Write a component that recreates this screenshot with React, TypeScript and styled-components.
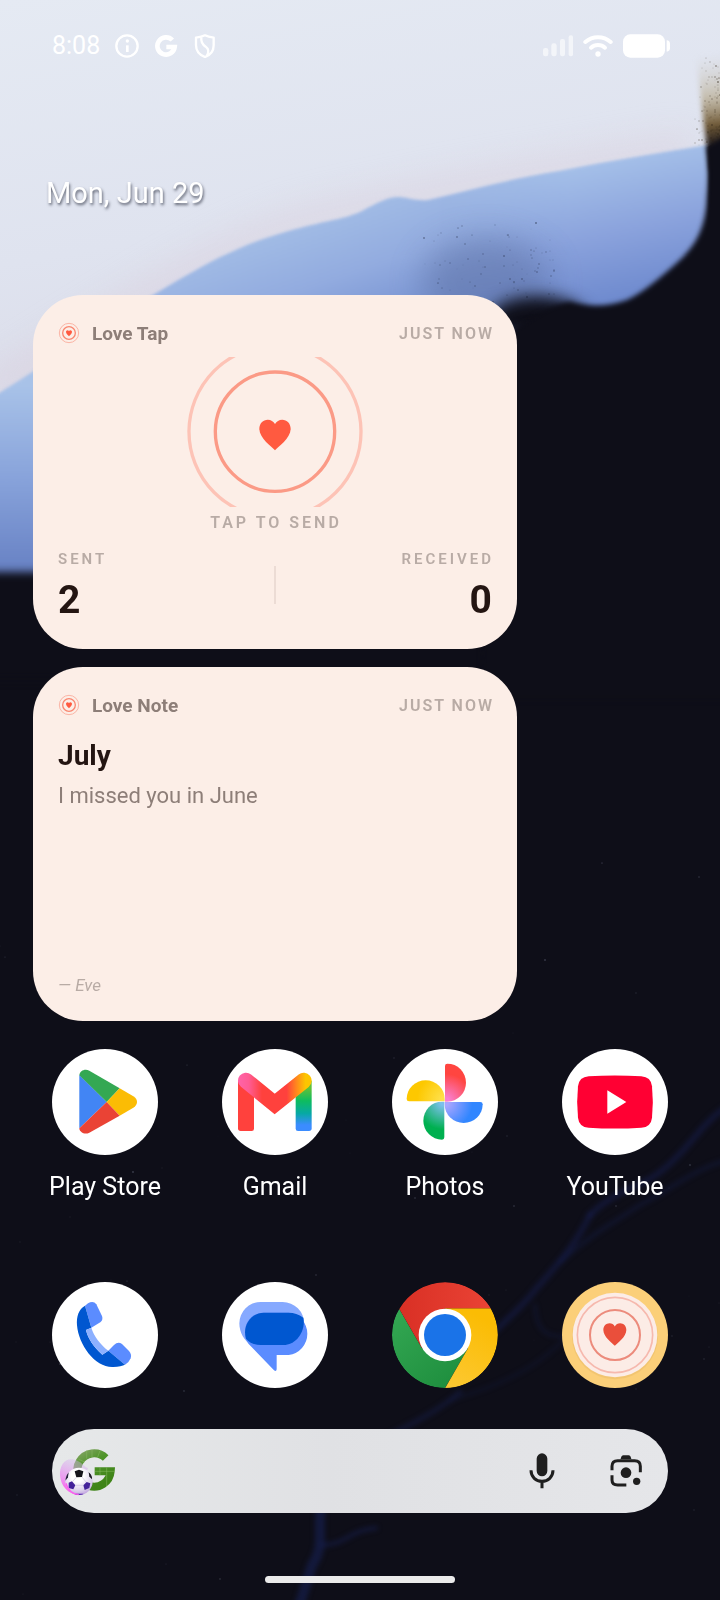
import React from "react";
import styled, { createGlobalStyle } from "styled-components";

const GlobalStyle = createGlobalStyle`
  *, *::before, *::after { box-sizing: border-box; }
  body {
    margin: 0;
    background: #0e0e18;
    font-family: Roboto, "Liberation Sans", sans-serif;
  }
  button, input { font: inherit; color: inherit; }
  h1, h2, p, dl, dd, dt { margin: 0; font-weight: inherit; }
`;

/* ---------- layout ---------- */

const Screen = styled.div`
  position: relative;
  isolation: isolate;
  min-height: 100vh;
  display: flex;
  flex-direction: column;
  overflow: hidden;
`;

const WallpaperSvg = styled.svg`
  position: absolute;
  inset: 0;
  z-index: -1;
  width: 100%;
  height: 100%;
  color-interpolation-filters: sRGB;
`;

const StatusBar = styled.header`
  display: flex;
  justify-content: space-between;
  align-items: center;
  padding: 32px 50px 0 52px;
  color: #fff;
`;

const StatusGroup = styled.div<{ $gap: number }>`
  display: flex;
  align-items: center;
  gap: ${(p) => p.$gap}px;
`;

const Clock = styled.time`
  font-size: 25px;
  line-height: 28px;
`;

const DateLine = styled.p`
  && { margin: 115px 46px 84px; }
  color: #fff;
  font-size: 29px;
  line-height: 36px;
  text-shadow: 1px 2px 3px rgba(40, 44, 60, 0.7);
`;

const HomeGrid = styled.main`
  display: grid;
  grid-template-columns: repeat(4, 1fr);
  padding: 0 20px;
`;

const Widget = styled.section`
  grid-column: span 3;
  display: flex;
  flex-direction: column;
  min-height: 354px;
  margin: 0 13px 18px;
  padding: 27px 25px 26px;
  border-radius: 50px;
  background: #fceee7;
  color: #241512;
`;

const WidgetHeader = styled.div`
  display: flex;
  align-items: flex-start;
  line-height: 24px;
`;

const WidgetTitle = styled.h2`
  && { margin-left: 12px; font-weight: 700; }
  flex: 1;
  font-size: 19px;
  color: #8d7e78;
`;

const Caption = styled.span<{ $wide?: boolean }>`
  margin-right: -2px;
  font-size: 16px;
  line-height: 24px;
  font-weight: 600;
  letter-spacing: ${(p) => (p.$wide ? 3 : 2)}px;
  text-transform: uppercase;
  color: #b8aba5;
`;

const StatCaption = styled(Caption)`
  font-size: 15px;
`;

const TapButton = styled.button`
  display: flex;
  flex-direction: column;
  align-items: center;
  gap: 4px;
  margin-top: 11px;
  padding: 0;
  border: 0;
  background: none;
  cursor: pointer;
`;

const Counters = styled.dl`
  && { margin-top: 12px; }
  display: grid;
  grid-template-columns: 1fr 2px 1fr;
  align-items: center;
`;

const Counter = styled.div<{ $end?: boolean }>`
  display: flex;
  flex-direction: column;
  gap: 7px;
  align-items: ${(p) => (p.$end ? "flex-end" : "flex-start")};
`;

const CountValue = styled.dd`
  && { font-weight: 700; }
  font-size: 39px;
  line-height: 44px;
`;

const Divider = styled.div`
  height: 38px;
  background: #ecdcd5;
`;

const NoteTitle = styled.h1`
  && { margin-top: 20px; font-weight: 700; }
  font-size: 28px;
  line-height: 36px;
`;

const NoteBody = styled.p`
  && { margin-top: 8px; }
  font-size: 22px;
  line-height: 28px;
  color: #8d7e78;
`;

const NoteAuthor = styled.p`
  && { margin-top: auto; }
  font-size: 17px;
  line-height: 20px;
  font-style: italic;
  color: #b8aba5;
`;

const AppLink = styled.a`
  display: flex;
  flex-direction: column;
  align-items: center;
  gap: 16px;
  color: #fff;
  font-size: 25px;
  line-height: 32px;
  text-decoration: none;
  white-space: nowrap;
`;

const AppRow = styled.nav`
  grid-column: 1 / -1;
  display: grid;
  grid-template-columns: subgrid;
  margin-top: 10px;
`;

const Dock = styled(AppRow)`
  margin-top: 79px;
`;

const IconSvg = styled.svg<{ $bare?: boolean }>`
  display: block;
  width: 106px;
  height: 106px;
  border-radius: 50%;
  background: ${(p) => (p.$bare ? "none" : "#fff")};
`;

const SearchBar = styled.form`
  display: flex;
  align-items: center;
  height: 84px;
  margin: 41px 52px 0;
  padding: 0 18px 0 6px;
  border-radius: 42px;
  background: linear-gradient(90deg, #e6e8e9, #e0e1e4 45%, #e5e6e9);
  color: #1f1f1f;
`;

const SearchInput = styled.input`
  flex: 1;
  min-width: 0;
  height: 56px;
  border: 0;
  outline: 0;
  background: transparent;
  font-size: 24px;
`;

const IconButton = styled.button`
  display: flex;
  padding: 0;
  border: 0;
  background: none;
  cursor: pointer;
  & + & { margin-left: 36px; }
`;

const GestureBar = styled.div`
  align-self: center;
  width: 190px;
  height: 7px;
  margin: 63px 0 16px;
  border-radius: 4px;
  background: #ebebeb;
`;

/* ---------- wallpaper ---------- */

type Dot = { x: number; y: number; r: number; o: number };

function scatter(seed: number, count: number, x: number, y: number, w: number, h: number, bias: number): Dot[] {
  let s = seed;
  const next = () => {
    s = (s * 16807) % 2147483647;
    return s / 2147483647;
  };
  return Array.from({ length: count }, () => ({
    x: Math.round(x + w * Math.pow(next(), bias)),
    y: Math.round(y + h * Math.pow(next(), bias)),
    r: 0.4 + next() * 0.6,
    o: 0.12 + next() * 0.4,
  }));
}

const stars = scatter(77, 60, 0, 850, 720, 750, 1);
const dust = scatter(913, 90, 420, 222, 135, 85, 0.7);
const grit = scatter(4211, 130, 694, 50, 28, 95, 0.5);

const Dots = ({ dots, fill }: { dots: Dot[]; fill: string }) => (
  <g fill={fill}>
    {dots.map((d, i) => (
      <circle key={i} cx={d.x} cy={d.y} r={d.r} opacity={d.o} />
    ))}
  </g>
);

const Wallpaper = () => (
  <WallpaperSvg viewBox="0 0 720 1600" preserveAspectRatio="xMidYMin slice" aria-hidden="true">
    <defs>
      <linearGradient id="sky" x1="0" y1="0" x2="0.25" y2="1">
        <stop offset="0" stopColor="#e5eaf3" />
        <stop offset="0.5" stopColor="#dfe3ef" />
        <stop offset="0.85" stopColor="#dadbe8" />
        <stop offset="1" stopColor="#d6d9ea" />
      </linearGradient>
      <linearGradient id="wave" gradientUnits="userSpaceOnUse" x1="300" y1="190" x2="360" y2="370">
        <stop offset="0" stopColor="#a9c4e8" />
        <stop offset="0.5" stopColor="#92abdf" />
        <stop offset="1" stopColor="#6683c9" />
      </linearGradient>
      <linearGradient id="waveRight" gradientUnits="userSpaceOnUse" x1="590" y1="165" x2="620" y2="305">
        <stop offset="0" stopColor="#a4bfe8" />
        <stop offset="0.5" stopColor="#8aa2dc" />
        <stop offset="1" stopColor="#6c88cd" />
      </linearGradient>
      <linearGradient id="waveLeft" gradientUnits="userSpaceOnUse" x1="0" y1="385" x2="0" y2="575">
        <stop offset="0" stopColor="#a8c2e8" />
        <stop offset="0.5" stopColor="#87a2da" />
        <stop offset="1" stopColor="#6680c3" />
      </linearGradient>
      <linearGradient id="fadeIn" gradientUnits="userSpaceOnUse" x1="440" y1="0" x2="570" y2="0">
        <stop offset="0" stopColor="#000" />
        <stop offset="1" stopColor="#fff" />
      </linearGradient>
      <linearGradient id="scorch" gradientUnits="userSpaceOnUse" x1="704" y1="55" x2="716" y2="148">
        <stop offset="0" stopColor="#cdc8bd" stopOpacity="0" />
        <stop offset="0.45" stopColor="#b3a483" stopOpacity="0.6" />
        <stop offset="0.75" stopColor="#705a38" />
        <stop offset="1" stopColor="#14121a" />
      </linearGradient>
      <mask id="rightMask">
        <rect width="720" height="600" fill="url(#fadeIn)" />
      </mask>
      <filter id="soft1" x="-10%" y="-10%" width="120%" height="120%"><feGaussianBlur stdDeviation="1.5" /></filter>
      <filter id="soft2" x="-30%" y="-30%" width="160%" height="160%"><feGaussianBlur stdDeviation="2.5" /></filter>
      <filter id="soft4" x="-30%" y="-30%" width="160%" height="160%"><feGaussianBlur stdDeviation="4" /></filter>
      <filter id="soft8" x="-50%" y="-50%" width="200%" height="200%"><feGaussianBlur stdDeviation="8" /></filter>
      <filter id="soft16" x="-60%" y="-60%" width="220%" height="220%"><feGaussianBlur stdDeviation="16" /></filter>
      <clipPath id="waveClip">
        <path d="M-10 399 C60 356 100 325 153 295 C215 258 245 242 300 228 C330 220 345 219 362 211 C378 202 390 196 400 197 C410 198 416 201 428 200 C470 190 510 179 560 171 C610 161 660 153 709 145 V620 H-10Z" />
      </clipPath>
    </defs>
    <rect width="720" height="1600" fill="#0e0e18" />
    <path d="M0 0 H720 V140 L702 150 L300 420 L0 500Z" fill="url(#sky)" />
    <path d="M-10 390 C60 348 200 252 300 222 C400 196 560 168 690 146" fill="none" stroke="#d9cbd9" strokeOpacity="0.55" strokeWidth="22" filter="url(#soft16)" />

    <g filter="url(#soft1)">
      <path
        d="M-10 399 C60 356 100 325 153 295 C215 258 245 242 300 228 C330 220 345 219 362 211 C378 202 390 196 400 197 C410 198 416 201 428 200 C470 190 510 179 560 171 C610 161 660 153 709 145 V620 H-10Z"
        fill="url(#wave)"
      />
      <path d="M-10 399 C20 380 60 356 90 333 V600 H-10Z" fill="url(#waveLeft)" />
      <path d="M428 200 C470 190 510 179 560 171 C610 161 660 153 709 145 V330 H428Z" fill="url(#waveRight)" mask="url(#rightMask)" />
    </g>

    <path d="M696 52 L728 36 V170 H710 C704 130 700 90 696 52Z" fill="url(#scorch)" filter="url(#soft2)" />
    <Dots dots={grit} fill="#33281a" />

    <g clipPath="url(#waveClip)">
      <ellipse cx="486" cy="282" rx="64" ry="44" fill="#5f73a6" opacity="0.55" filter="url(#soft16)" />
      <ellipse cx="538" cy="318" rx="48" ry="22" fill="#0e0e18" filter="url(#soft8)" />
    </g>
    <path d="M-20 572 H60 L480 362 L520 326 L600 318 V680 H-20Z" fill="#0e0e18" filter="url(#soft4)" />
    <path
      d="M500 340 C530 320 548 306 570 302 C590 307 606 307 627 300 C642 293 662 277 682 258 C696 244 706 227 707 196 C709 178 708 160 707 148 L728 134 V700 H480Z"
      fill="#0e0e18"
      filter="url(#soft2)"
    />
    <Dots dots={dust} fill="#1d2439" />

    <g fill="none" stroke="#18225a" strokeLinecap="round" filter="url(#soft2)">
      <path d="M730 1105 C700 1122 690 1150 660 1172 C640 1188 615 1190 590 1215" strokeWidth="6" opacity="0.45" />
      <path d="M590 1215 C575 1245 560 1262 535 1290 C520 1310 500 1325 480 1345" strokeWidth="6" opacity="0.45" />
      <path d="M730 1160 C700 1165 670 1190 640 1205 C610 1225 590 1235 560 1262" strokeWidth="4" opacity="0.35" />
      <path d="M535 1305 C536 1335 550 1340 580 1334" strokeWidth="3" opacity="0.35" />
      <path d="M600 1290 C560 1365 500 1385 450 1400" strokeWidth="3" opacity="0.25" />
      <path d="M460 1392 C440 1410 410 1425 380 1440" strokeWidth="5" opacity="0.4" />
      <path d="M322 1500 C316 1530 326 1545 312 1565 L298 1610" strokeWidth="10" opacity="0.55" />
      <path d="M322 1545 C345 1545 350 1530 376 1528" strokeWidth="4" opacity="0.5" />
    </g>
    <Dots dots={stars} fill="#6a6f82" />
  </WallpaperSvg>
);

/* ---------- small drawings ---------- */

const HEART =
  "M50 98 C40 86 0 60 0 29 C0 12 12 0 27 0 C37 0 45 5 50 14 C55 5 63 0 73 0 C88 0 100 12 100 29 C100 60 60 86 50 98Z";

const Heart = ({ x, y, size, fill }: { x: number; y: number; size: number; fill: string }) => (
  <path d={HEART} fill={fill} transform={`translate(${x} ${y}) scale(${size / 100})`} />
);

const LoveMark = () => (
  <svg width="22" height="22" viewBox="0 0 66 66" fill="none" aria-hidden="true">
    <circle cx="33" cy="33" r="29" stroke="#fbb5a6" strokeWidth="3" />
    <circle cx="33" cy="33" r="19" stroke="#f98670" strokeWidth="4" />
    <Heart x={24} y={25} size={18} fill="#ff5a40" />
  </svg>
);

const TapRings = () => (
  <svg width="180" height="150" viewBox="0 0 540 450" fill="none" aria-hidden="true">
    <circle cx="270" cy="224" r="258" stroke="#fdc3b6" strokeWidth="10" />
    <circle cx="270" cy="224" r="179" stroke="#fb9a86" strokeWidth="10" />
    <Heart x={223} y={188} size={94} fill="#ff5a40" />
  </svg>
);

const StatusIcons = () => (
  <>
    <svg width="24" height="24" viewBox="0 0 72 72" fill="none" stroke="#fff" role="img" aria-label="Info">
      <circle cx="36" cy="36" r="32" strokeWidth="7" />
      <path d="M37 34V54" strokeWidth="8" />
      <circle cx="37" cy="21" r="5" fill="#fff" stroke="none" />
    </svg>
    <svg width="24" height="24" viewBox="0 0 72 72" fill="none" stroke="#fff" strokeWidth="14" role="img" aria-label="Google">
      <path d="M55 18 A26 26 0 1 0 62 39 H37" />
    </svg>
    <svg width="24" height="24" viewBox="0 0 72 72" fill="none" stroke="#fff" strokeWidth="7" strokeLinejoin="round" role="img" aria-label="Security">
      <path d="M36 4 C43 8 52 10 62 11 V34 C62 52 50 64 36 69 C22 64 9 52 9 34 V11 C19 10 29 8 36 4Z" />
      <path d="M25 10 C23 26 29 32 38 38 C49 46 48 54 42 65" />
    </svg>
  </>
);

const SystemIcons = () => (
  <>
    <svg width="30" height="24" viewBox="0 0 90 72" fill="#fff" role="img" aria-label="No signal">
      <g opacity="0.6">
        <rect x="0" y="42" width="16" height="25" rx="7" />
        <rect x="25" y="28" width="16" height="39" rx="7" />
        <rect x="51" y="15" width="15" height="52" rx="7" />
        <rect x="77" y="4" width="13" height="63" rx="6" />
      </g>
    </svg>
    <svg width="30" height="24" viewBox="0 0 90 72" fill="none" stroke="#fff" strokeWidth="12" strokeLinecap="round" role="img" aria-label="Wi-Fi">
      <path d="M7 24 C29 5 61 5 83 24" />
      <path d="M24 41 C36 30 54 30 66 41" />
      <circle cx="45" cy="60" r="8" fill="#fff" stroke="none" />
    </svg>
    <svg width="47" height="24" viewBox="0 0 141 72" fill="#fff" role="img" aria-label="Battery full">
      <rect x="0" y="1" width="126" height="70" rx="22" />
      <path d="M131 19 Q141 20 141 30 V43 Q141 52 131 53Z" />
    </svg>
  </>
);

/* ---------- app icons ---------- */

const PlayStoreIcon = () => (
  <IconSvg viewBox="0 0 318 318" aria-hidden="true">
    <path d="M82 78 L164 159 L82 238Z" fill="#4285f4" />
    <path d="M82 79 C83 65 99 58 112 65 L203 118 L164 159Z" fill="#34a853" />
    <path d="M203 118 L244 142 Q255 149 255 159 Q255 169 244 176 L203 200 L164 159Z" fill="#fbbc04" />
    <path d="M164 159 L203 200 L112 251 C99 258 83 251 82 238Z" fill="#ea4335" />
  </IconSvg>
);

const GmailIcon = () => (
  <IconSvg viewBox="0 0 318 318" aria-hidden="true">
    <defs>
      <linearGradient id="gmTop" gradientUnits="userSpaceOnUse" x1="50" y1="80" x2="268" y2="80">
        <stop offset="0" stopColor="#ff63a8" />
        <stop offset="0.14" stopColor="#ff5c94" />
        <stop offset="0.32" stopColor="#ff413d" />
        <stop offset="0.66" stopColor="#ff413d" />
        <stop offset="0.8" stopColor="#ff8a1c" />
        <stop offset="0.92" stopColor="#fdc500" />
      </linearGradient>
      <linearGradient id="gmLeg" x1="0" y1="0" x2="0" y2="1">
        <stop offset="0.15" stopColor="#5fc13a" />
        <stop offset="0.4" stopColor="#0ebc5f" />
        <stop offset="0.65" stopColor="#07a9a4" />
        <stop offset="0.88" stopColor="#3b8cff" />
      </linearGradient>
    </defs>
    <path d="M48 95 H96 V239 Q96 246 89 246 H56 Q48 246 48 238Z" fill="#ff413d" />
    <path d="M221 95 H269 V238 Q269 246 261 246 H228 Q221 246 221 239Z" fill="url(#gmLeg)" />
    <path d="M72 95 L158 165 L245 95" fill="none" stroke="url(#gmTop)" strokeWidth="48" strokeLinecap="round" />
  </IconSvg>
);

const petals = [
  { id: "ptRed", turn: 0, near: "#f97fd0", far: "#ff4540" },
  { id: "ptBlue", turn: 90, near: "#a9a5ff", far: "#3186ff" },
  { id: "ptGreen", turn: 180, near: "#7cc0ec", far: "#00b050" },
  { id: "ptYellow", turn: 270, near: "#ffe04a", far: "#fdc800" },
];

const PhotosIcon = () => (
  <IconSvg viewBox="0 0 318 318" aria-hidden="true">
    <defs>
      {petals.map((p) => (
        <radialGradient key={p.id} id={p.id} gradientUnits="userSpaceOnUse" cx="162" cy="156" r="90">
          <stop offset="0.1" stopColor={p.near} />
          <stop offset="0.9" stopColor={p.far} />
        </radialGradient>
      ))}
    </defs>
    {petals.map((p) => (
      <path
        key={p.id}
        d="M159 51 Q159 44 166 44 A56 57 0 0 1 166 158 H159Z"
        fill={`url(#${p.id})`}
        transform={`rotate(${p.turn} 158 158)`}
      />
    ))}
  </IconSvg>
);

const YouTubeIcon = () => (
  <IconSvg viewBox="0 0 318 318" aria-hidden="true">
    <path
      d="M80 82 Q158 77 238 82 Q267 84 270 112 Q275 159 270 206 Q267 234 238 236 Q158 241 80 236 Q51 234 48 206 Q43 159 48 112 Q51 84 80 82Z"
      fill="#ff0033"
    />
    <path d="M136 124 L193 159 L136 194Z" fill="#fff" />
  </IconSvg>
);

const PhoneIcon = () => (
  <IconSvg viewBox="0 0 318 318" aria-hidden="true">
    <path d="M99 71 L108 64 Q124 54 133 67 L150 102 Q154 113 146 120 L118 137Z" fill="#5b8cff" />
    <path d="M169 206 L186 189 Q198 177 210 186 L231 207 Q240 217 236 229 Q231 242 219 248Z" fill="#5b8cff" />
    <path d="M99 71 C80 82 73 103 75 130 C80 190 130 258 184 255 C200 254 212 251 219 248 L169 206 L151 218 C125 195 108 170 102 144 L118 137Z" fill="#0057d0" />
    <path d="M102 144 L118 137 C126 163 145 188 169 206 L151 218 C125 195 108 170 102 144Z" fill="#8cb0ff" />
  </IconSvg>
);

const MessagesIcon = () => (
  <IconSvg viewBox="0 0 318 318" aria-hidden="true">
    <path d="M116 60 H182 A64 64 0 0 1 182 189 H90 C66 178 52 150 52 124 A64 64 0 0 1 116 60Z" fill="#86a9ff" />
    <path d="M125 92 H200 A64 64 0 0 1 200 219 H164 V262 Q163 270 156 265 L80 186 C72 176 69 166 69 150 C69 116 94 92 125 92Z" fill="#5b8cff" />
    <path d="M125 92 H200 C216 92 230 97 244 107 C252 148 222 189 184 189 H116 C98 189 82 182 72 170 C60 130 88 92 125 92Z" fill="#0057d0" />
  </IconSvg>
);

const ChromeIcon = () => (
  <IconSvg $bare viewBox="0 0 318 318" aria-hidden="true">
    <defs>
      <linearGradient id="crRed" x1="0" y1="0" x2="1" y2="0">
        <stop offset="0" stopColor="#d93025" />
        <stop offset="1" stopColor="#ea4335" />
      </linearGradient>
      <linearGradient id="crYellow" x1="0" y1="1" x2="0.4" y2="0">
        <stop offset="0" stopColor="#fcc934" />
        <stop offset="1" stopColor="#fbbc04" />
      </linearGradient>
      <linearGradient id="crGreen" x1="0" y1="0" x2="0.8" y2="1">
        <stop offset="0" stopColor="#34a853" />
        <stop offset="1" stopColor="#1e8e3e" />
      </linearGradient>
    </defs>
    <path d="M159 318 A159 159 0 0 1 0 159 Q0 115 22 81 L90 199 L228 199Z" fill="url(#crGreen)" />
    <path d="M296 79 A160 160 0 0 1 159 319 L228 199 L159 79Z" fill="url(#crYellow)" />
    <path d="M22 81 A159 159 0 0 1 297 79 H159 L90 199Z" fill="url(#crRed)" />
    <circle cx="159" cy="159" r="79" fill="#fff" />
    <circle cx="159" cy="159" r="63" fill="#1a73e8" />
  </IconSvg>
);

const LoveIcon = () => (
  <IconSvg $bare viewBox="0 0 318 318" fill="none" aria-hidden="true">
    <rect width="318" height="318" fill="#fbcf79" />
    <circle cx="159" cy="163" r="129" fill="#e9bb68" opacity="0.5" />
    <circle cx="159" cy="159" r="127" fill="#fcece6" />
    <circle cx="159" cy="159" r="113" stroke="#f6b9ae" strokeWidth="5" />
    <circle cx="159" cy="159" r="75" stroke="#ec8b7c" strokeWidth="6" />
    <Heart x={124} y={124} size={69} fill="#ea4f3b" />
  </IconSvg>
);

/* ---------- search icons ---------- */

const DoodleIcon = () => (
  <svg width="60" height="50" viewBox="0 0 180 150" fill="none" aria-hidden="true">
    <defs>
      <linearGradient id="grass" x1="0" y1="0" x2="0.6" y2="1">
        <stop offset="0" stopColor="#7fa35f" />
        <stop offset="0.4" stopColor="#4f9429" />
        <stop offset="1" stopColor="#3f8418" />
      </linearGradient>
      <linearGradient id="glow" x1="0.3" y1="1" x2="0.6" y2="0">
        <stop offset="0" stopColor="#ff4dea" />
        <stop offset="0.35" stopColor="#ee84f2" stopOpacity="0.85" />
        <stop offset="1" stopColor="#d3b8ee" stopOpacity="0.35" />
      </linearGradient>
      <radialGradient id="ball" cx="0.45" cy="0.3" r="0.75">
        <stop offset="0.3" stopColor="#fff" />
        <stop offset="0.75" stopColor="#d9cdea" />
        <stop offset="1" stopColor="#b995dc" />
      </radialGradient>
      <clipPath id="ballClip"><circle cx="63" cy="106" r="41" /></clipPath>
    </defs>
    <path d="M143 36 A50 50 0 1 0 158 76 H110" stroke="url(#grass)" strokeWidth="24" />
    <path d="M86 13V38M102 11V34M126 14L118 36M62 40L80 48M126 64V88M146 64V120M110 76H170" stroke="#8fbf68" strokeOpacity="0.7" strokeWidth="2" />
    <path d="M44 40 C20 36 4 60 6 88 C8 120 30 144 62 148 L90 66 C80 66 70 44 44 40Z" fill="url(#glow)" />
    <circle cx="63" cy="106" r="41" fill="url(#ball)" />
    <g clipPath="url(#ballClip)">
      <path d="M50 76 L63 71 L76 76 L72 93 L55 94Z" fill="#16151c" />
      <path d="M20 86 L32 78 L30 94 L22 104Z" fill="#241f3a" />
      <path d="M92 78 L102 86 L102 100 L94 92Z" fill="#1b1a22" />
      <path d="M32 110 L42 106 L52 118 L46 130 L32 126Z" fill="#44229a" />
      <path d="M76 118 L86 108 L97 112 L94 126 L80 132Z" fill="#44229a" />
      <path d="M52 143 H76 V150 H52Z" fill="#5a2bb0" />
      <path d="M55 94L44 106M72 93L84 108M52 118L76 118" stroke="#cfc3e2" strokeWidth="2" />
      <path d="M22 112 C28 134 44 146 62 148" stroke="#ff5cf0" strokeWidth="8" />
    </g>
  </svg>
);

const MicIcon = () => (
  <svg width="48" height="48" viewBox="0 0 144 144" fill="none" stroke="#1f1f1f" aria-hidden="true">
    <rect x="56" y="19" width="32" height="69" rx="16" fill="#1f1f1f" stroke="none" />
    <path d="M39 70 C39 90 54 103 72 103 S105 90 105 70M72 103V124" strokeWidth="9" />
  </svg>
);

const LensIcon = () => (
  <svg width="48" height="48" viewBox="0 0 144 144" fill="none" stroke="#1f1f1f" aria-hidden="true">
    <path d="M30 70 V58 Q30 41 47 41 H98 Q115 41 115 58 V76" strokeWidth="9" />
    <path d="M30 85 V99 Q30 114 47 114 H73" strokeWidth="9" />
    <path d="M54 37 C58 37 56 25 64 25 H80 C88 25 86 37 90 37Z" fill="#1f1f1f" stroke="none" />
    <circle cx="72" cy="77" r="16" fill="#1f1f1f" stroke="none" />
    <circle cx="104" cy="103" r="11" fill="#1f1f1f" stroke="none" />
  </svg>
);

/* ---------- screen ---------- */

const homeApps = [
  { name: "Play Store", Icon: PlayStoreIcon },
  { name: "Gmail", Icon: GmailIcon },
  { name: "Photos", Icon: PhotosIcon },
  { name: "YouTube", Icon: YouTubeIcon },
];

const dockApps = [
  { name: "Phone", Icon: PhoneIcon },
  { name: "Messages", Icon: MessagesIcon },
  { name: "Chrome", Icon: ChromeIcon },
  { name: "Love Tap", Icon: LoveIcon },
];

export default function App() {
  return (
    <Screen>
      <GlobalStyle />
      <Wallpaper />
      <StatusBar>
        <StatusGroup $gap={15}>
          <Clock>8:08</Clock>
          <StatusIcons />
        </StatusGroup>
        <StatusGroup $gap={10}>
          <SystemIcons />
        </StatusGroup>
      </StatusBar>
      <DateLine>Mon, Jun 29</DateLine>

      <HomeGrid>
        <Widget>
          <WidgetHeader>
            <LoveMark />
            <WidgetTitle>Love Tap</WidgetTitle>
            <Caption>Just now</Caption>
          </WidgetHeader>
          <TapButton type="button">
            <TapRings />
            <Caption $wide>Tap to send</Caption>
          </TapButton>
          <Counters>
            <Counter>
              <StatCaption as="dt" $wide>Sent</StatCaption>
              <CountValue>2</CountValue>
            </Counter>
            <Divider />
            <Counter $end>
              <StatCaption as="dt" $wide>Received</StatCaption>
              <CountValue>0</CountValue>
            </Counter>
          </Counters>
        </Widget>

        <Widget>
          <WidgetHeader>
            <LoveMark />
            <WidgetTitle>Love Note</WidgetTitle>
            <Caption>Just now</Caption>
          </WidgetHeader>
          <NoteTitle>July</NoteTitle>
          <NoteBody>I missed you in June</NoteBody>
          <NoteAuthor>— Eve</NoteAuthor>
        </Widget>

        <AppRow aria-label="Apps">
          {homeApps.map(({ name, Icon }) => (
            <AppLink key={name} href="#">
              <Icon />
              {name}
            </AppLink>
          ))}
        </AppRow>
        <Dock aria-label="Dock">
          {dockApps.map(({ name, Icon }) => (
            <AppLink key={name} href="#" aria-label={name}>
              <Icon />
            </AppLink>
          ))}
        </Dock>
      </HomeGrid>

      <SearchBar role="search">
        <IconButton type="button" aria-label="Google Doodle">
          <DoodleIcon />
        </IconButton>
        <SearchInput type="text" aria-label="Search" />
        <IconButton type="button" aria-label="Voice search">
          <MicIcon />
        </IconButton>
        <IconButton type="button" aria-label="Google Lens">
          <LensIcon />
        </IconButton>
      </SearchBar>
      <GestureBar />
    </Screen>
  );
}
